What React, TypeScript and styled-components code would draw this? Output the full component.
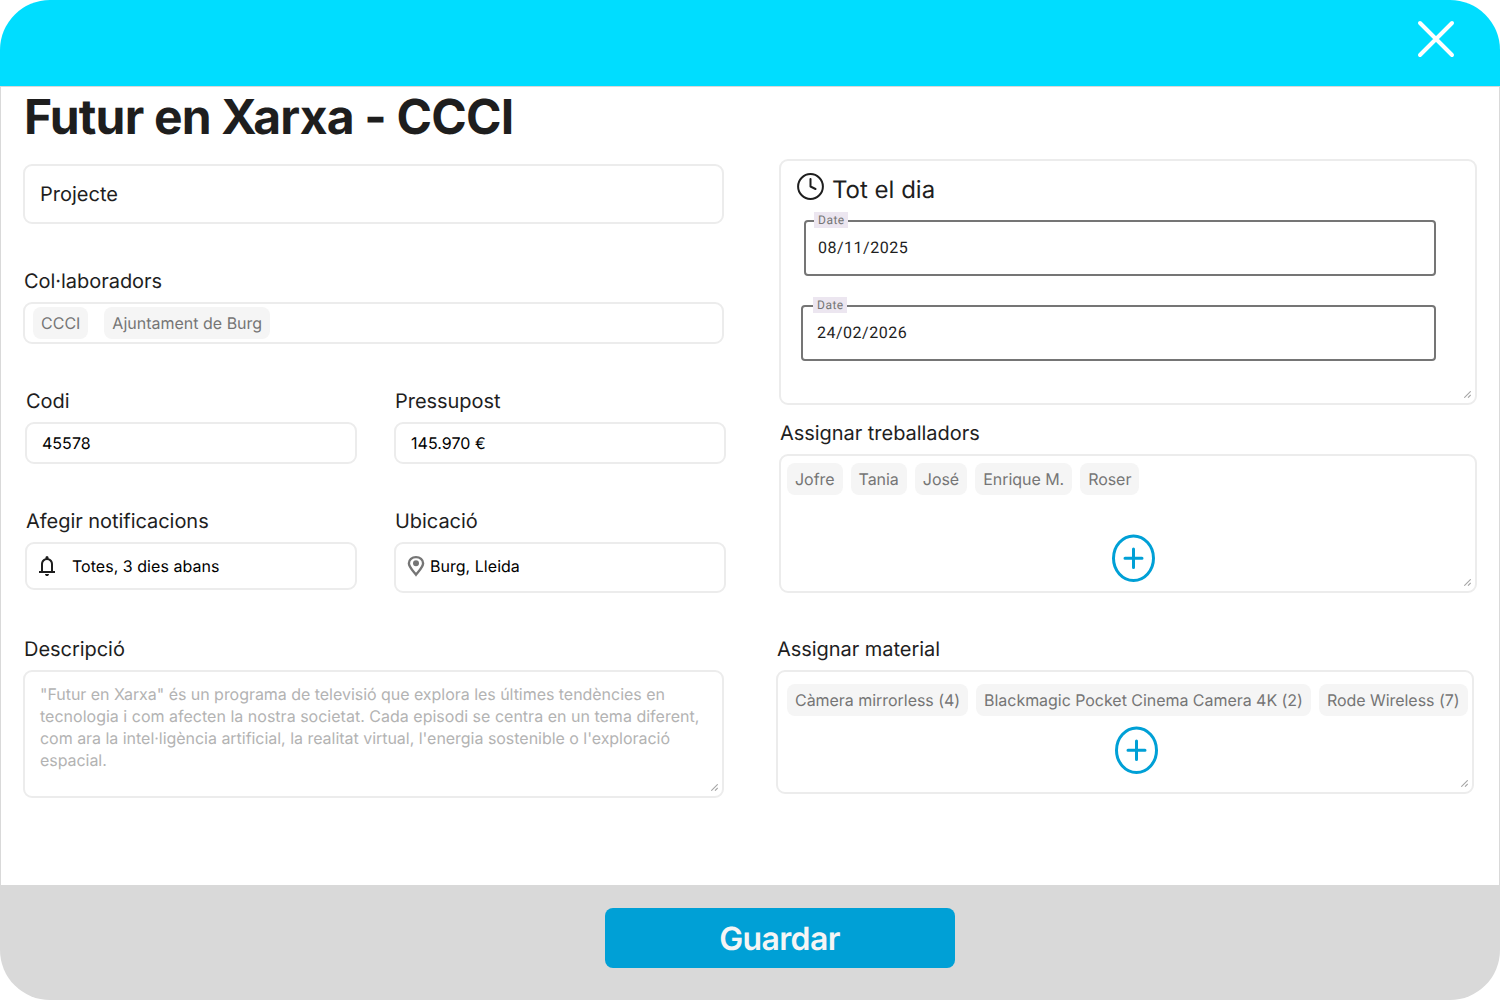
import React from "react";
import styled, { createGlobalStyle } from "styled-components";

const GlobalStyle = createGlobalStyle`
  *, *::before, *::after { box-sizing: border-box; }
  body { margin: 0; background: #fff; font-family: Inter, "Liberation Sans", sans-serif; color: #1e1e1e; text-rendering: geometricPrecision; }
`;

const Modal = styled.div`
  display: flex;
  flex-direction: column;
  width: 1500px;
  height: 1000px;
  border-radius: 50px;
  overflow: hidden;
  background: #fff;
`;

const Header = styled.header`
  display: flex;
  flex: none;
  justify-content: flex-end;
  align-items: flex-start;
  height: 86px;
  padding: 19px 44px 0 0;
  background: #00ddff;
`;

const CloseButton = styled.button`
  width: 40px;
  height: 40px;
  padding: 0;
  border: 0;
  background: none;
  svg { display: block; }
`;

const Body = styled.main`
  display: flex;
  flex: 1;
  justify-content: space-between;
  align-items: flex-start;
  padding: 0 22px;
  border: 1px solid #d9d9d9;
  border-bottom: 0;
`;

const Footer = styled.footer`
  display: flex;
  flex: none;
  justify-content: center;
  height: 115px;
  padding: 23px 0 0 60px;
  background: #d9d9d9;
`;

const SaveButton = styled.button`
  width: 350px;
  height: 60px;
  padding: 1px 1px 0 0;
  border: 0;
  border-radius: 8px;
  background: #00a0d6;
  color: #f5f5f5;
  font: 600 32px/60px Inter, sans-serif;
  letter-spacing: -0.64px;
  text-rendering: geometricPrecision;
`;

const LeftColumn = styled.section`
  width: 703px;
  padding-top: 1px;
`;

const RightColumn = styled.section`
  width: 701px;
  padding-top: 72px;
`;

const Title = styled.h1`
  margin: 0 0 18px 1px;
  font-size: 48px;
  line-height: 58px;
  font-weight: 700;
  letter-spacing: -0.81px;
  white-space: nowrap;
`;

const Box = styled.div<{ $h: number; $w?: number }>`
  position: relative;
  display: flex;
  align-items: center;
  width: ${(p) => p.$w ?? 701}px;
  height: ${(p) => p.$h}px;
  border: 2px solid #ececec;
  border-radius: 9px;
  background: #fff;
`;

const ProjectBox = styled(Box)`
  padding-left: 15px;
  font-size: 20px;
`;

const ValueBox = styled(Box)`
  padding-left: 15px;
  color: #000;
  font-size: 16px;
  letter-spacing: 0.03px;
`;

const IconBox = styled(ValueBox)<{ $pad: number; $gap: number }>`
  padding: 0 0 0 ${(p) => p.$pad}px;
  gap: ${(p) => p.$gap}px;
  align-items: flex-start;
  line-height: 44px;
  svg { flex: none; }
`;

const BellSvg = styled.svg`
  margin-top: 10px;
`;

const PinSvg = styled.svg`
  margin-top: 11px;
`;

const TagBox = styled(Box)<{ $left: number; $gap: number }>`
  align-items: flex-start;
  gap: ${(p) => p.$gap}px;
  padding: 3px 0 0 ${(p) => p.$left}px;
`;

const StackBox = styled(Box)<{ $top: number }>`
  flex-direction: column;
  align-items: stretch;
  padding: ${(p) => p.$top}px 0 0 8px;
`;

const TagRow = styled.div<{ $inset: number }>`
  display: flex;
  gap: 8px;
  margin-left: ${(p) => p.$inset}px;
  letter-spacing: -0.04px;
`;

const Tag = styled.span`
  flex: none;
  height: 32px;
  padding: 0 8px;
  border-radius: 8px;
  background: #f5f5f5;
  color: #757575;
  font-size: 16px;
  line-height: 32px;
  white-space: nowrap;
`;

const AddButton = styled.button<{ $top: number; $left: number }>`
  width: 43px;
  height: 48px;
  margin: ${(p) => p.$top}px 0 0 ${(p) => p.$left}px;
  padding: 0;
  border: 0;
  background: none;
  svg { display: block; }
`;

const Field = styled.div<{ $mt?: number; $ml?: number }>`
  margin: ${(p) => p.$mt ?? 0}px 0 0 ${(p) => p.$ml ?? 0}px;
`;

const FieldRow = styled.div`
  display: flex;
  gap: 37px;
  margin: 43px 0 0 2px;
`;

const Label = styled.div`
  margin-bottom: 7px;
  padding-left: 1px;
  font-size: 20px;
  line-height: 28px;
  letter-spacing: -0.04px;
  white-space: nowrap;
`;

const Description = styled(Box)`
  flex-direction: column;
  align-items: flex-start;
  padding: 11px 0 0 15px;
  color: #b3b3b3;
  font-size: 16px;
  line-height: 22px;
`;

const Line = styled.span<{ $track: number }>`
  letter-spacing: ${(p) => p.$track}px;
  white-space: nowrap;
`;

const Grip = styled.svg`
  position: absolute;
  right: 4px;
  bottom: 5px;
`;

const Schedule = styled(Box)`
  flex-direction: column;
  align-items: flex-start;
  padding: 11px 0 0 16px;
`;

const ScheduleHead = styled.div`
  display: flex;
  gap: 8px;
  height: 48px;
  font-size: 24px;
  line-height: 35px;
`;

const DateField = styled.div<{ $ml: number; $w: number; $mb: number; $pad: number }>`
  position: relative;
  width: ${(p) => p.$w}px;
  height: 56px;
  margin: 0 0 ${(p) => p.$mb}px ${(p) => p.$ml}px;
  padding-left: ${(p) => p.$pad}px;
  border: 2px solid #757575;
  border-radius: 4px;
  font: 400 16px/52px Roboto, sans-serif;
  letter-spacing: 0.5px;
`;

const DateLabel = styled.span<{ $left: number }>`
  position: absolute;
  top: -10px;
  left: ${(p) => p.$left}px;
  width: 34px;
  height: 16px;
  padding-left: 4px;
  background: #ece6f0;
  color: #757575;
  font-size: 12px;
  line-height: 16px;
`;

const ResizeGrip = () => (
  <Grip width="7" height="7" viewBox="0 0 7 7" stroke="#a6a6a6" strokeWidth="1.1">
    <path d="M0.3 6.7L6.7 0.3M4 6.7L6.7 4" />
  </Grip>
);

const PlusIcon = () => (
  <svg width="43" height="48" viewBox="0 0 43 48" fill="none" stroke="#00a0d6" strokeWidth="3" strokeLinecap="round">
    <ellipse cx="21.5" cy="24.2" rx="20" ry="22.2" />
    <path d="M21.5 15V33.6M13 24.3H30" />
  </svg>
);

const workers = ["Jofre", "Tania", "José", "Enrique M.", "Roser"];
const material = ["Càmera mirrorless (4)", "Blackmagic Pocket Cinema Camera 4K (2)", "Rode Wireless (7)"];
const description = [
  { text: "\"Futur en Xarxa\" és un programa de televisió que explora les últimes tendències en", track: -0.036 },
  { text: "tecnologia i com afecten la nostra societat. Cada episodi se centra en un tema diferent,", track: 0.012 },
  { text: "com ara la intel·ligència artificial, la realitat virtual, l'energia sostenible o l'exploració", track: -0.03 },
  { text: "espacial.", track: -0.05 },
];

export default function App() {
  return (
    <>
      <GlobalStyle />
      <Modal>
        <Header>
          <CloseButton aria-label="Tancar">
            <svg width="40" height="40" viewBox="0 0 40 40" stroke="#fff" strokeWidth="4" strokeLinecap="round">
              <path d="M4 4L36 36M36 4L4 36" />
            </svg>
          </CloseButton>
        </Header>
        <Body>
          <LeftColumn>
            <Title>Futur en Xarxa - CCCI</Title>
            <ProjectBox $h={60}>Projecte</ProjectBox>
            <Field $mt={43}>
              <Label>Col·laboradors</Label>
              <TagBox $h={42} $left={8} $gap={16}>
                <Tag>CCCI</Tag>
                <Tag>Ajuntament de Burg</Tag>
              </TagBox>
            </Field>
            <FieldRow>
              <Field>
                <Label>Codi</Label>
                <ValueBox $h={42} $w={332}>45578</ValueBox>
              </Field>
              <Field>
                <Label>Pressupost</Label>
                <ValueBox $h={42} $w={332}>145.970 €</ValueBox>
              </Field>
            </FieldRow>
            <FieldRow>
              <Field>
                <Label>Afegir notificacions</Label>
                <IconBox $h={48} $w={332} $pad={8} $gap={13}>
                  <BellSvg width="24" height="24" viewBox="0 -960 960 960" fill="#1e1e1e">
                    <path d="M160-200v-80h80v-280q0-83 50-147.5T420-792v-28q0-25 17.5-42.5T480-880t42.5 17.5T540-820v28q80 20 130 84.5T720-560v280h80v80H160Zm320 120q-33 0-56.5-23.5T400-160h160q0 33-23.5 56.5T480-80ZM320-280h320v-280q0-66-47-113t-113-47q-66 0-113 47t-47 113v280Z" />
                  </BellSvg>
                  Totes, 3 dies abans
                </IconBox>
              </Field>
              <Field>
                <Label>Ubicació</Label>
                <IconBox $h={51} $w={332} $pad={11} $gap={5}>
                  <PinSvg width="18" height="22" viewBox="0 0 18 22" fill="none">
                    <path d="M9 19.6C7.4 17.2 1.9 12.6 1.9 8.3C1.9 4.7 5 2.1 9 2.1S16.1 4.7 16.1 8.3C16.1 12.6 10.6 17.2 9 19.6Z" stroke="#757575" strokeWidth="2.4" />
                    <circle cx="9" cy="8.3" r="3" fill="#757575" />
                  </PinSvg>
                  Burg, Lleida
                </IconBox>
              </Field>
            </FieldRow>
            <Field $mt={42}>
              <Label>Descripció</Label>
              <Description $h={128}>
                {description.map((line) => (
                  <Line key={line.text} $track={line.track}>{line.text}</Line>
                ))}
                <ResizeGrip />
              </Description>
            </Field>
          </LeftColumn>
          <RightColumn>
            <Field $ml={3}>
              <Schedule $h={246} $w={698}>
                <ScheduleHead>
                  <svg width="27" height="28" viewBox="0 0 27 28" fill="none" stroke="#1e1e1e" strokeWidth="2" strokeLinecap="round" strokeLinejoin="round">
                    <circle cx="13.5" cy="14.5" r="12.4" />
                    <path d="M13.5 7V14.5L18.5 17" />
                  </svg>
                  Tot el dia
                </ScheduleHead>
                <DateField $ml={7} $w={632} $mb={29} $pad={12}>
                  <DateLabel $left={8}>Date</DateLabel>
                  08/11/2025
                </DateField>
                <DateField $ml={4} $w={635} $mb={0} $pad={14}>
                  <DateLabel $left={10}>Date</DateLabel>
                  24/02/2026
                </DateField>
                <ResizeGrip />
              </Schedule>
            </Field>
            <Field $mt={14} $ml={3}>
              <Label>Assignar treballadors</Label>
              <StackBox $h={139} $w={698} $top={7}>
                <TagRow $inset={-2}>
                  {workers.map((name) => (
                    <Tag key={name}>{name}</Tag>
                  ))}
                </TagRow>
                <AddButton $top={39} $left={323} aria-label="Afegir treballador">
                  <PlusIcon />
                </AddButton>
                <ResizeGrip />
              </StackBox>
            </Field>
            <Field $mt={42}>
              <Label>Assignar material</Label>
              <StackBox $h={124} $w={698} $top={12}>
                <TagRow $inset={1}>
                  {material.map((name) => (
                    <Tag key={name}>{name}</Tag>
                  ))}
                </TagRow>
                <AddButton $top={10} $left={329} aria-label="Afegir material">
                  <PlusIcon />
                </AddButton>
                <ResizeGrip />
              </StackBox>
            </Field>
          </RightColumn>
        </Body>
        <Footer>
          <SaveButton>Guardar</SaveButton>
        </Footer>
      </Modal>
    </>
  );
}
